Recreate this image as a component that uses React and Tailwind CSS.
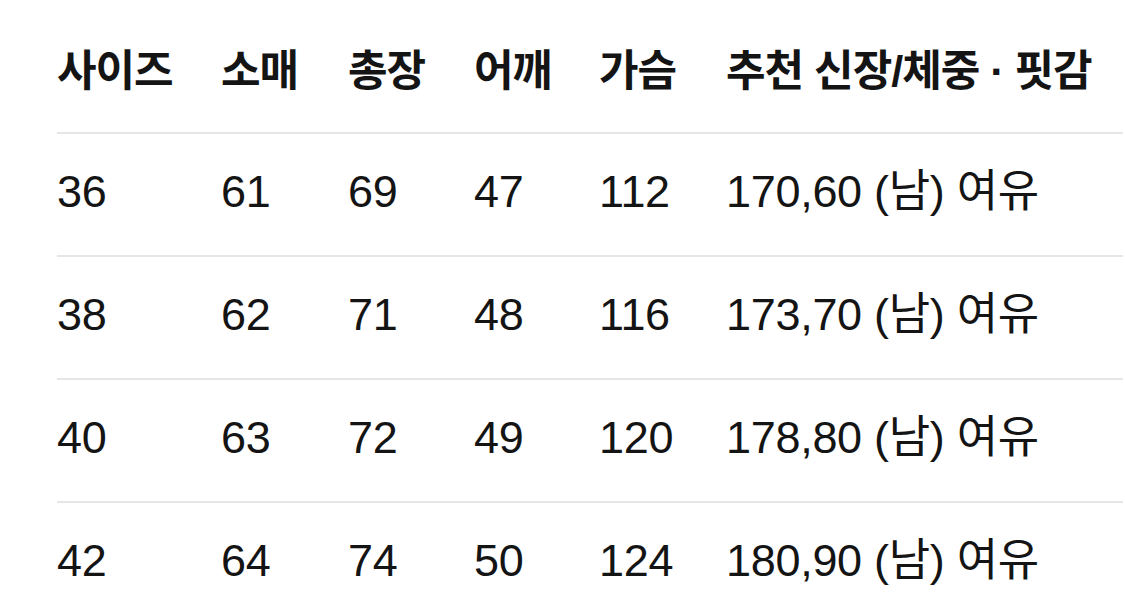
import React from "react";

const headers = ["사이즈", "소매", "총장", "어깨", "가슴", "추천 신장/체중 · 핏감"];

const rows = [
  ["36", "61", "69", "47", "112", "170,60 (남) 여유"],
  ["38", "62", "71", "48", "116", "173,70 (남) 여유"],
  ["40", "63", "72", "49", "120", "178,80 (남) 여유"],
  ["42", "64", "74", "50", "124", "180,90 (남) 여유"],
];

const widths = ["w-[164px]", "w-[127px]", "w-[126px]", "w-[125px]", "w-[127px]", "flex-1"];

const App = () => {
  return (
    <div
      className="w-[1125px] h-[616px] overflow-hidden bg-white text-[#141414] pl-[57px] pr-[2px]"
      style={{ fontFamily: '"Liberation Sans", "Noto Sans CJK KR", sans-serif' }}
    >
      {/* header */}
      <div className="flex h-[134px] items-center border-b-2 border-[#e6e6e6] pt-[10px]">
        {headers.map((h, i) => (
          <div key={i} className={`${widths[i]} text-[43px] leading-[54px] font-bold whitespace-nowrap tracking-[-1px]`}>
            {h}
          </div>
        ))}
      </div>

      {/* rows */}
      {rows.map((r, ri) => (
        <div key={ri} className="flex h-[123px] items-center border-b-2 border-[#e6e6e6] pb-[6px]">
          {r.map((c, ci) => (
            <div key={ci} className={`${widths[ci]} text-[45px] leading-[54px] whitespace-nowrap tracking-[-0.3px]`}>
              {c}
            </div>
          ))}
        </div>
      ))}
    </div>
  );
};

export default App;
